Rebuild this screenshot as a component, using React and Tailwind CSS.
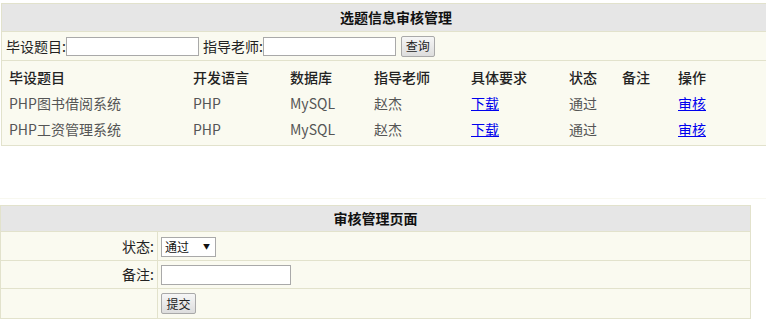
import { useState } from 'react';

const rows = [
  { title: 'PHP图书借阅系统', lang: 'PHP', db: 'MySQL', teacher: '赵杰', status: '通过' },
  { title: 'PHP工资管理系统', lang: 'PHP', db: 'MySQL', teacher: '赵杰', status: '通过' },
];

const cols = 'grid grid-cols-[184px_97px_84px_97px_98px_53px_56px_1fr] items-center h-[26px]';

const App = () => {
  const [status, setStatus] = useState('通过');

  return (
    <div
      className="w-[766px] h-[323px] overflow-hidden bg-white text-[14px] text-[#333]"
      style={{ fontFamily: '"Noto Sans CJK SC", "Noto Sans", sans-serif' }}
    >
      {/* Top panel */}
      <div className="ml-[1px] mt-[3px] w-[790px] border border-[#e2e2cc] bg-[#fafaf0]">
        <div className="h-[28px] flex items-center justify-center bg-[#e6e6e6] border-b border-[#e2e2cc] font-bold text-[#111]">
          选题信息审核管理
        </div>
        <div className="h-[29px] flex items-center pl-[4px] border-b border-[#e2e2cc] text-[#222]">
          <span>毕设题目:</span>
          <input className="w-[133px] h-[19px] border border-[#a9a9a9] bg-white outline-none" />
          <span className="ml-[4px]">指导老师:</span>
          <input className="w-[133px] h-[19px] border border-[#a9a9a9] bg-white outline-none" />
          <button className="ml-[5px] w-[34px] h-[21px] text-[12px] leading-none border border-[#a9a9a9] rounded-[2px] bg-gradient-to-b from-[#f6f6f6] to-[#dddddd] text-[#222]">
            查询
          </button>
        </div>
        <div className="pl-[7px] pt-[3px] pb-[3px]">
          <div className={`${cols} text-[#222] font-medium`}>
            <span>毕设题目</span>
            <span>开发语言</span>
            <span>数据库</span>
            <span>指导老师</span>
            <span>具体要求</span>
            <span>状态</span>
            <span>备注</span>
            <span>操作</span>
          </div>
          {rows.map((r) => (
            <div key={r.title} className={`${cols} text-[#555]`}>
              <span>{r.title}</span>
              <span>{r.lang}</span>
              <span>{r.db}</span>
              <span>{r.teacher}</span>
              <a href="#" className="text-[#0000ee] underline">下载</a>
              <span>{r.status}</span>
              <span></span>
              <a href="#" className="text-[#0000ee] underline">审核</a>
            </div>
          ))}
        </div>
      </div>

      <div className="mt-[52px] h-px w-[766px] bg-[#f8f8f0]" />

      {/* Bottom panel */}
      <div className="mt-[6px] w-[751px] border border-[#e2e2cc] bg-[#fafaf0]">
        <div className="h-[26px] flex items-center justify-center bg-[#e6e6e6] border-b border-[#e2e2cc] font-bold text-[#111]">
          审核管理页面
        </div>
        <div className="grid grid-cols-[157px_1fr]">
          <div className="h-[29px] flex items-center justify-end pr-[3px] border-r border-b border-[#e2e2cc] text-[#222]">
            状态:
          </div>
          <div className="h-[29px] flex items-center pl-[3px] border-b border-[#e2e2cc]">
            <div className="relative w-[55px] h-[20px]">
              <select
                value={status}
                onChange={(e) => setStatus(e.target.value)}
                className="appearance-none w-full h-full pl-[3px] text-[12px] text-[#111] border border-[#a9a9a9] bg-white outline-none"
              >
                <option>通过</option>
                <option>未通过</option>
              </select>
              <span className="absolute right-[6px] top-[5px] text-[7px] text-[#111] pointer-events-none">▼</span>
            </div>
          </div>
          <div className="h-[28px] flex items-center justify-end pr-[3px] border-r border-b border-[#e2e2cc] text-[#222]">
            备注:
          </div>
          <div className="h-[28px] flex items-center pl-[3px] border-b border-[#e2e2cc]">
            <input className="w-[130px] h-[20px] border border-[#a9a9a9] bg-white outline-none" />
          </div>
          <div className="h-[29px] border-r border-[#e2e2cc]" />
          <div className="h-[29px] flex items-center pl-[3px]">
            <button className="w-[35px] h-[21px] text-[12px] leading-none border border-[#a9a9a9] rounded-[2px] bg-gradient-to-b from-[#f6f6f6] to-[#dddddd] text-[#222]">
              提交
            </button>
          </div>
        </div>
      </div>
    </div>
  );
};

export default App;
